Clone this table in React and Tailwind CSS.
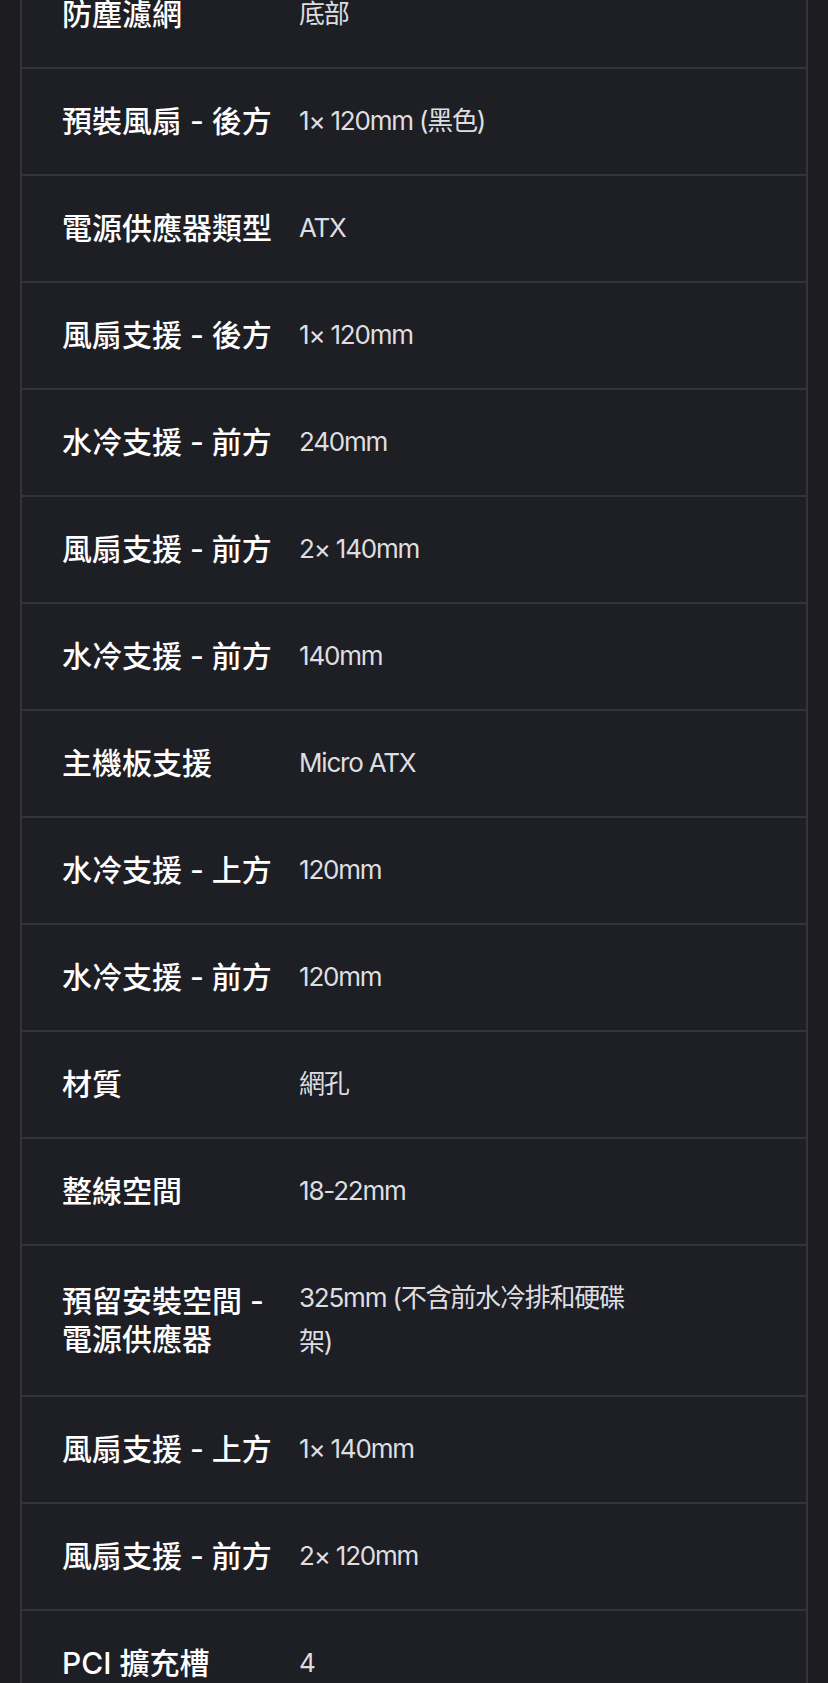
const specs = [
  ["防塵濾網", "底部"],
  ["預裝風扇 - 後方", "1× 120mm (黑色)"],
  ["電源供應器類型", "ATX"],
  ["風扇支援 - 後方", "1× 120mm"],
  ["水冷支援 - 前方", "240mm"],
  ["風扇支援 - 前方", "2× 140mm"],
  ["水冷支援 - 前方", "140mm"],
  ["主機板支援", "Micro ATX"],
  ["水冷支援 - 上方", "120mm"],
  ["水冷支援 - 前方", "120mm"],
  ["材質", "網孔"],
  ["整線空間", "18-22mm"],
  ["預留安裝空間 - 電源供應器", "325mm (不含前水冷排和硬碟架)"],
  ["風扇支援 - 上方", "1× 140mm"],
  ["風扇支援 - 前方", "2× 120mm"],
  ["PCI 擴充槽", "4"],
];

export default function App() {
  return (
    <div
      className="w-[828px] h-[1683px] overflow-hidden bg-[#1c1c21]"
      style={{ fontFamily: 'Inter, "Noto Sans CJK TC", sans-serif' }}
    >
      <div className="ml-[20px] mr-[20px] mt-[-38px] border-x-2 border-[#33333b] bg-[#1e1e25]">
        {specs.map(([label, value], i) => (
          <div
            key={i}
            className="flex items-center border-b-2 border-[#33333b] pl-[40px] pt-[30px] pb-[31px]"
          >
            <div className="w-[225px] mr-[12px] shrink-0 text-[30px] leading-[38px] font-medium text-white">
              {label}
            </div>
            <div className="w-[336px] text-[26px] leading-[44px] tracking-[-1.2px] text-[#dedee0]">
              {value}
            </div>
          </div>
        ))}
      </div>
    </div>
  );
}
